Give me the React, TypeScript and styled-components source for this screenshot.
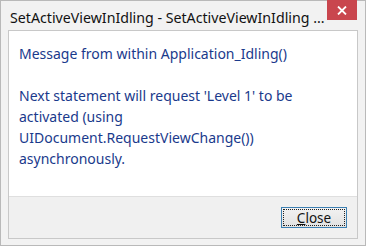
import React from 'react';
import styled, { createGlobalStyle } from 'styled-components';

const GlobalStyle = createGlobalStyle`
	html, body {
		margin: 0;
		padding: 0;
		background: #ffffff;
	}
`;

const App = () => {
	return (
		<>
			<GlobalStyle />
			<Window>
				<TitleBar>
					<Title>SetActiveViewInIdling - SetActiveViewInIdling ...</Title>
					<CloseX aria-label='close'>
						<svg width='10' height='9' viewBox='0 0 10 9'>
							<path d='M1 0.5 L9 8.5 M9 0.5 L1 8.5' stroke='#ffffff' strokeWidth='1.8' />
						</svg>
					</CloseX>
				</TitleBar>
				<Client>
					<Body>
						<Line>Message from within Application_Idling()</Line>
						<Gap />
						<Line>Next statement will request 'Level 1' to be</Line>
						<Line>activated (using</Line>
						<Line>UIDocument.RequestViewChange())</Line>
						<Line>asynchronously.</Line>
					</Body>
					<Footer>
						<Button>
							<Label>
								<u>C</u>lose
							</Label>
						</Button>
					</Footer>
				</Client>
			</Window>
		</>
	);
};

export default App;

const Window = styled.div({
	width: '366px',
	height: '246px',
	boxSizing: 'border-box',
	background: '#f2f2f2',
	border: '1px solid #b9b9b9',
	display: 'flex',
	flexDirection: 'column',
	padding: '0 7px 6px 7px',
	fontFamily: '"Noto Sans", "Open Sans", sans-serif',
});

const TitleBar = styled.div({
	height: '29px',
	display: 'flex',
	alignItems: 'flex-start',
	justifyContent: 'space-between',
});

const Title = styled.div({
	fontSize: '14.2px',
	color: '#111111',
	marginTop: '7px',
	marginLeft: '2px',
	whiteSpace: 'nowrap',
});

const CloseX = styled.div({
	width: '30px',
	height: '20px',
	marginTop: '-1px',
	marginRight: '1px',
	background: '#c9464e',
	display: 'flex',
	alignItems: 'center',
	justifyContent: 'center',
});

const Client = styled.div({
	flex: 1,
	border: '1px solid #c8c8c8',
	background: '#ffffff',
	display: 'flex',
	flexDirection: 'column',
});

const Body = styled.div({
	flex: 1,
	padding: '12px 10px 0 10px',
});

const Line = styled.div({
	fontSize: '14px',
	lineHeight: '21px',
	color: '#1a3a8c',
	whiteSpace: 'nowrap',
});

const Gap = styled.div({
	height: '21px',
});

const Footer = styled.div({
	height: '41px',
	background: '#f0f0f0',
	borderTop: '1px solid #dfdfdf',
	display: 'flex',
	alignItems: 'center',
	justifyContent: 'flex-end',
	paddingRight: '10px',
});

const Button = styled.div({
	width: '66px',
	height: '21px',
	boxSizing: 'border-box',
	border: '1px solid #3c7fb1',
	background: 'linear-gradient(#f2f2f2, #e2e2e2)',
	padding: '1px',
	display: 'flex',
});

const Label = styled.div({
	flex: 1,
	border: '1px dotted #222222',
	display: 'flex',
	alignItems: 'center',
	justifyContent: 'center',
	fontSize: '13.5px',
	color: '#111111',
});
